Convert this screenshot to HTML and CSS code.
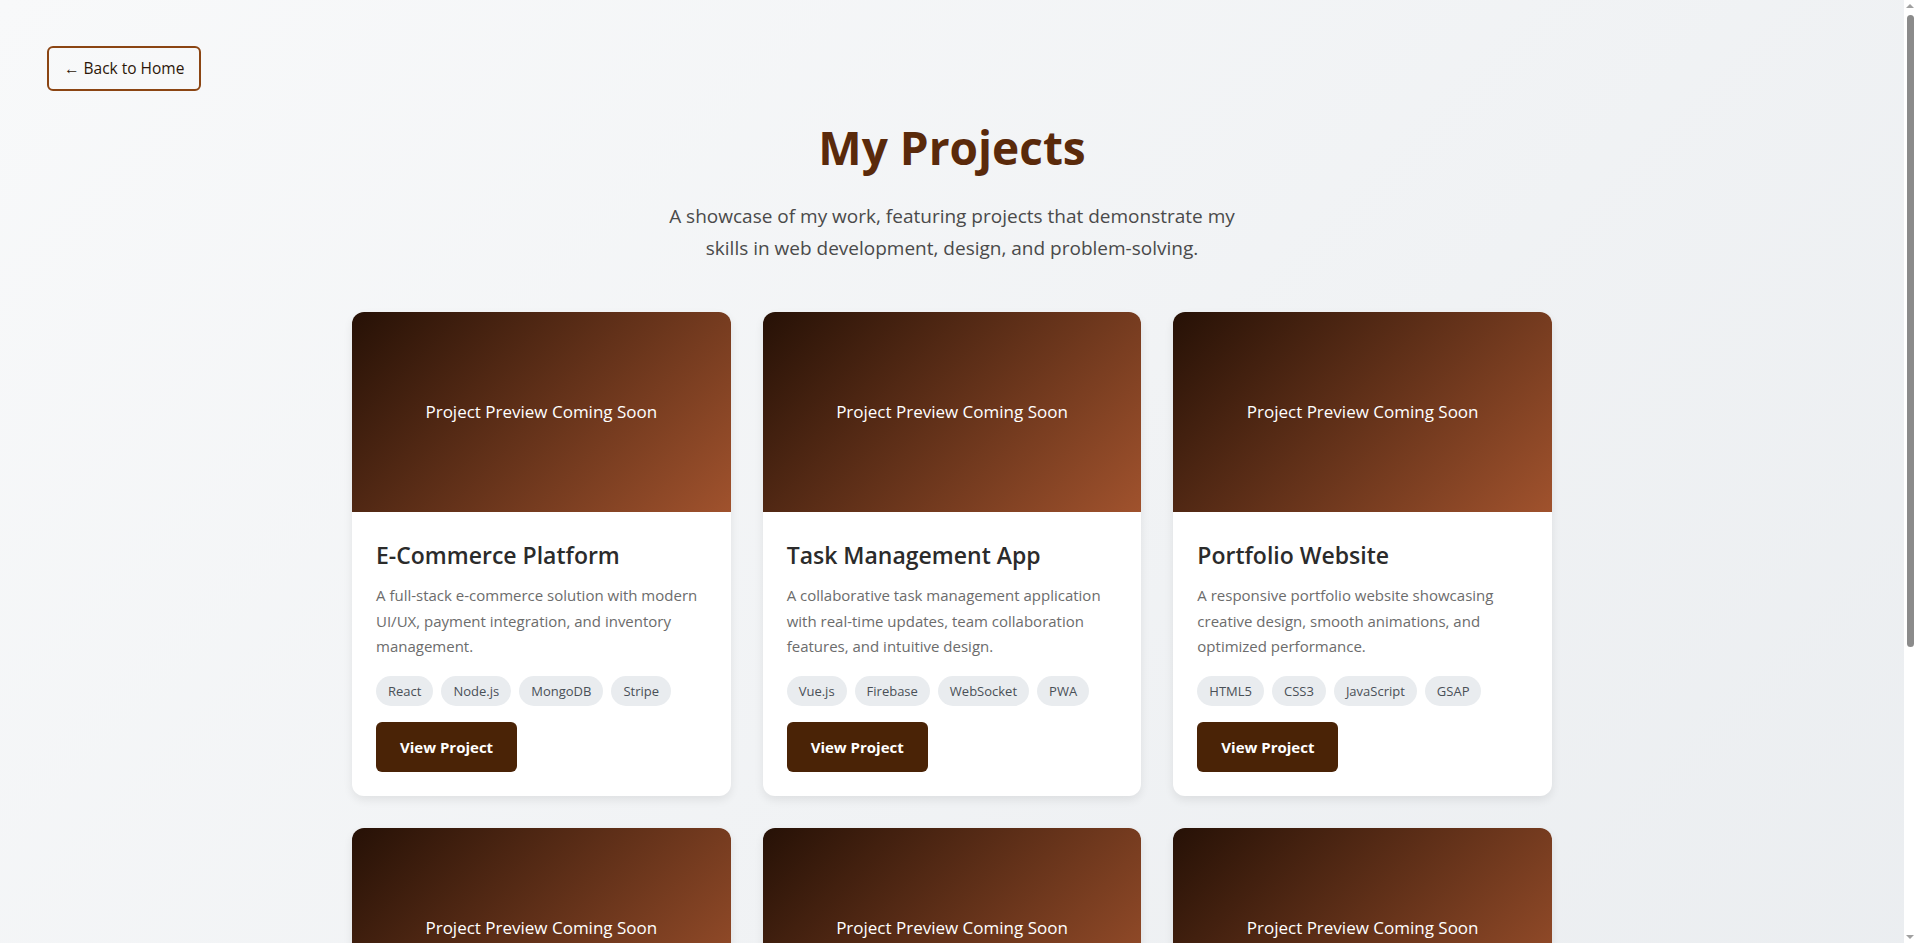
FILE: index.html
```html
<!DOCTYPE html>
<html lang="en">
<head>
<meta charset="utf-8">
<title>My Projects</title>
<link rel="stylesheet" href="styles.css">
</head>
<body>
<div class="page">
  <nav class="topbar">
    <a class="back-link" href="#">← Back to Home</a>
  </nav>
  <header class="intro">
    <h1 class="intro-title">My Projects</h1>
    <p class="intro-text">A showcase of my work, featuring projects that demonstrate my skills in web development, design, and problem-solving.</p>
  </header>
  <main class="grid">
    <article class="card">
      <div class="card-preview">Project Preview Coming Soon</div>
      <div class="card-body">
        <h2 class="card-title">E-Commerce Platform</h2>
        <p class="card-desc">A full-stack e-commerce solution with modern UI/UX, payment integration, and inventory management.</p>
        <ul class="tags"><li class="tag">React</li><li class="tag">Node.js</li><li class="tag">MongoDB</li><li class="tag">Stripe</li></ul>
        <a class="btn" href="#">View Project</a>
      </div>
    </article>
    <article class="card">
      <div class="card-preview">Project Preview Coming Soon</div>
      <div class="card-body">
        <h2 class="card-title">Task Management App</h2>
        <p class="card-desc">A collaborative task management application with real-time updates, team collaboration features, and intuitive design.</p>
        <ul class="tags"><li class="tag">Vue.js</li><li class="tag">Firebase</li><li class="tag">WebSocket</li><li class="tag">PWA</li></ul>
        <a class="btn" href="#">View Project</a>
      </div>
    </article>
    <article class="card">
      <div class="card-preview">Project Preview Coming Soon</div>
      <div class="card-body">
        <h2 class="card-title">Portfolio Website</h2>
        <p class="card-desc">A responsive portfolio website showcasing creative design, smooth animations, and optimized performance.</p>
        <ul class="tags"><li class="tag">HTML5</li><li class="tag">CSS3</li><li class="tag">JavaScript</li><li class="tag">GSAP</li></ul>
        <a class="btn" href="#">View Project</a>
      </div>
    </article>
    <article class="card">
      <div class="card-preview">Project Preview Coming Soon</div>
      <div class="card-body">
        <h2 class="card-title">Weather Dashboard</h2>
        <p class="card-desc">A clean weather dashboard with location search, hourly forecasts, and interactive data charts.</p>
        <ul class="tags"><li class="tag">React</li><li class="tag">Chart.js</li><li class="tag">API</li></ul>
        <a class="btn" href="#">View Project</a>
      </div>
    </article>
    <article class="card">
      <div class="card-preview">Project Preview Coming Soon</div>
      <div class="card-body">
        <h2 class="card-title">Blog Platform</h2>
        <p class="card-desc">A content platform with markdown editing, comments, and secure user authentication.</p>
        <ul class="tags"><li class="tag">Next.js</li><li class="tag">Prisma</li><li class="tag">PostgreSQL</li></ul>
        <a class="btn" href="#">View Project</a>
      </div>
    </article>
    <article class="card">
      <div class="card-preview">Project Preview Coming Soon</div>
      <div class="card-body">
        <h2 class="card-title">Chat Application</h2>
        <p class="card-desc">A real-time messaging app with group chats, file sharing, and push notifications.</p>
        <ul class="tags"><li class="tag">Socket.io</li><li class="tag">Express</li><li class="tag">Redis</li></ul>
        <a class="btn" href="#">View Project</a>
      </div>
    </article>
  </main>
</div>
<div class="scrollbar" aria-hidden="true">
  <span class="scrollbar-arrow scrollbar-arrow-up"></span>
  <span class="scrollbar-thumb"></span>
  <span class="scrollbar-arrow scrollbar-arrow-down"></span>
</div>
</body>
</html>
```
FILE: styles.css
```css
* {
  box-sizing: border-box;
}

html {
  background: #f8f9fa;
}

body {
  margin: 0;
  padding-right: 11px;
  min-height: 100vh;
  font-family: "Open Sans", "Noto Sans", sans-serif;
  line-height: 1.6;
  color: #333;
  background: linear-gradient(135deg, #f8f9fa 0%, #e9ecef 100%);
}

.page {
  padding: 46px 47px 50px;
}

.topbar {
  display: flex;
}

.back-link {
  display: inline-flex;
  align-items: center;
  height: 45px;
  padding: 0 15px;
  border: 2px solid #8b4513;
  border-radius: 6px;
  color: #2c1608;
  font-size: 15.5px;
  text-decoration: none;
}

.intro {
  margin: 27px auto 48px;
  max-width: 600px;
  text-align: center;
}

.intro-title {
  margin: 0 0 24px;
  font-size: 46px;
  line-height: 58px;
  font-weight: 700;
  color: #5a2a0b;
}

.intro-text {
  margin: 0;
  font-size: 19px;
  line-height: 32px;
  color: #4a4a4a;
}

.grid {
  display: grid;
  grid-template-columns: repeat(3, 1fr);
  gap: 32px;
  max-width: 1200px;
  margin: 0 auto;
}

.card {
  background: #fff;
  border-radius: 12px;
  overflow: hidden;
  box-shadow: 0 4px 10px rgba(0, 0, 0, 0.08);
}

.card-preview {
  height: 200px;
  display: flex;
  align-items: center;
  justify-content: center;
  background: linear-gradient(135deg, #261106 0%, #a0522d 100%);
  color: #fff;
  font-size: 17px;
}

.card-body {
  padding: 24px;
}

.card-title {
  margin: 0 0 8px;
  font-size: 23px;
  line-height: 39px;
  font-weight: 600;
  color: #2b2b2b;
}

.card-desc {
  margin: 0 0 16px;
  font-size: 15px;
  line-height: 25.6px;
  color: #6c6c6c;
}

.tags {
  display: flex;
  flex-wrap: wrap;
  gap: 8px;
  margin: 0 0 16px;
  padding: 0;
  list-style: none;
}

.tag {
  padding: 5px 12px;
  border-radius: 15px;
  background: #e9ecef;
  color: #495057;
  font-size: 13px;
  line-height: 20px;
}

.btn {
  display: inline-block;
  padding: 12px 24px;
  border-radius: 6px;
  background: #4a2306;
  color: #fff;
  font-size: 15px;
  line-height: 26px;
  font-weight: 700;
  text-decoration: none;
}

/* browser scrollbar as seen in the screenshot */
.scrollbar {
  position: fixed;
  top: 0;
  right: 0;
  bottom: 0;
  width: 11px;
  background: #ffffff;
}

.scrollbar-thumb {
  position: absolute;
  top: 15px;
  left: 3px;
  width: 7px;
  height: 632px;
  border-radius: 4px;
  background: #8b8b8b;
}

.scrollbar-arrow {
  position: absolute;
  left: 2px;
  width: 0;
  height: 0;
  border-left: 4px solid transparent;
  border-right: 4px solid transparent;
}

.scrollbar-arrow-up {
  top: 4px;
  border-bottom: 4px solid #a0a0a0;
}

.scrollbar-arrow-down {
  bottom: 4px;
  border-top: 4px solid #a0a0a0;
}
```
